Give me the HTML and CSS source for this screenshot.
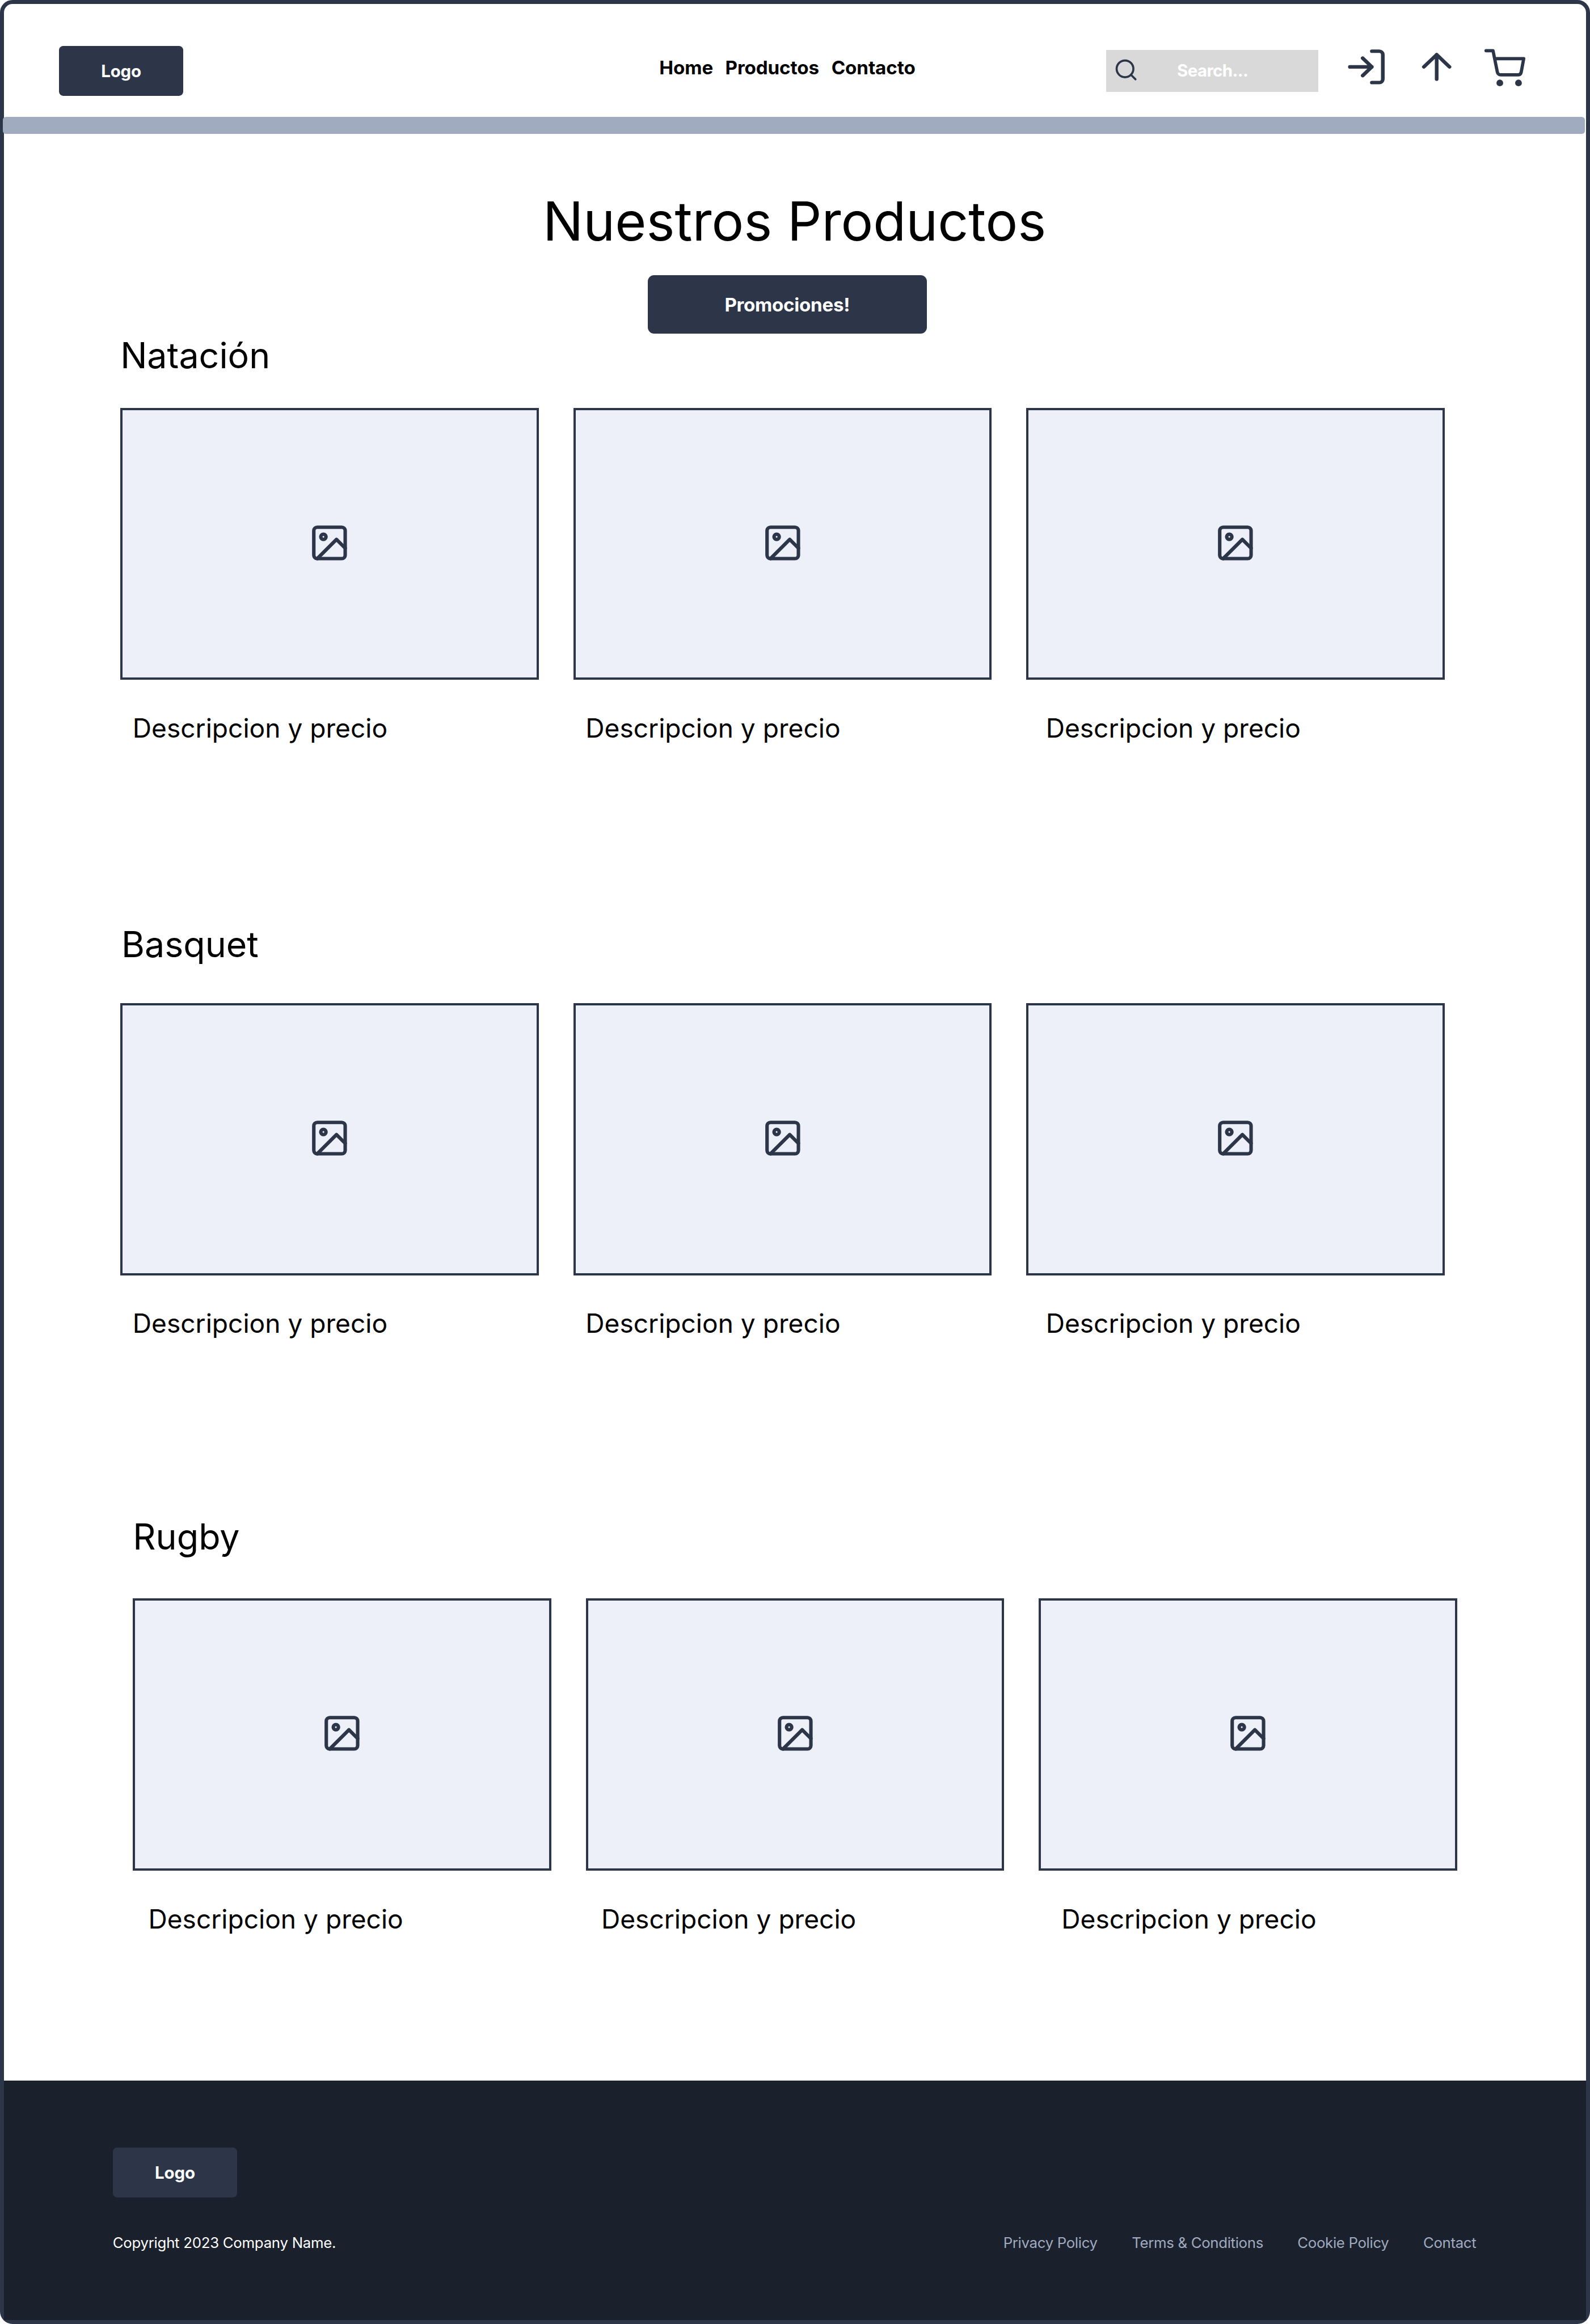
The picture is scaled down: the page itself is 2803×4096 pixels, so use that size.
FILE: index.html
```html
<!DOCTYPE html>
<html lang="es">
<head>
<meta charset="utf-8">
<title>Nuestros Productos</title>
<link rel="stylesheet" href="styles.css">
</head>
<body>
<svg class="sprite" aria-hidden="true">
  <symbol id="image" viewBox="0 0 24 24">
    <rect x="3" y="3" width="18" height="18" rx="2"/>
    <circle cx="8.5" cy="8.5" r="1.5"/>
    <path d="M21 15l-5-5L5 21"/>
  </symbol>
</svg>
<div class="page">
  <header class="header">
    <a class="logo">Logo</a>
    <nav class="nav"><a>Home</a><a>Productos</a><a>Contacto</a></nav>
    <div class="search">
      <svg class="icon search-icon" viewBox="0 0 24 24"><circle cx="11" cy="11" r="8"/><path d="M21 21l-4.35-4.35"/></svg>
      <span class="search-text">Search...</span>
    </div>
    <svg class="icon action" viewBox="0 0 24 24" preserveAspectRatio="none"><path d="M15 3h4a2 2 0 0 1 2 2v14a2 2 0 0 1-2 2h-4M10 17l5-5-5-5M15 12H3"/></svg>
    <svg class="icon action" viewBox="0 0 24 24" preserveAspectRatio="none"><path d="M12 19V5M5 12l7-7 7 7"/></svg>
    <svg class="icon action cart" viewBox="0 0 84 80"><path d="M3 9H16.3L24.5 49.5A6.6 6.6 0 0 0 31 55.3H64.5A6.6 6.6 0 0 0 70.2 50L75 24.3H19.4"/><circle class="wheel" cx="29.3" cy="70.7" r="6.4"/><circle class="wheel" cx="65" cy="70.7" r="6.4"/></svg>
  </header>
  <div class="divider"></div>
  <main class="main">
    <h1 class="title">Nuestros Productos</h1>
    <a class="promo">Promociones!</a>
    <section class="sport natacion">
      <h2 class="sport-name">Natación</h2>
      <div class="cards">
        <article class="card"><div class="photo"><svg class="icon photo-icon"><use href="#image"/></svg></div><p class="caption">Descripcion y precio</p></article>
        <article class="card"><div class="photo"><svg class="icon photo-icon"><use href="#image"/></svg></div><p class="caption">Descripcion y precio</p></article>
        <article class="card"><div class="photo"><svg class="icon photo-icon"><use href="#image"/></svg></div><p class="caption">Descripcion y precio</p></article>
      </div>
    </section>
    <section class="sport basquet">
      <h2 class="sport-name">Basquet</h2>
      <div class="cards">
        <article class="card"><div class="photo"><svg class="icon photo-icon"><use href="#image"/></svg></div><p class="caption">Descripcion y precio</p></article>
        <article class="card"><div class="photo"><svg class="icon photo-icon"><use href="#image"/></svg></div><p class="caption">Descripcion y precio</p></article>
        <article class="card"><div class="photo"><svg class="icon photo-icon"><use href="#image"/></svg></div><p class="caption">Descripcion y precio</p></article>
      </div>
    </section>
    <section class="sport rugby">
      <h2 class="sport-name">Rugby</h2>
      <div class="cards">
        <article class="card"><div class="photo"><svg class="icon photo-icon"><use href="#image"/></svg></div><p class="caption">Descripcion y precio</p></article>
        <article class="card"><div class="photo"><svg class="icon photo-icon"><use href="#image"/></svg></div><p class="caption">Descripcion y precio</p></article>
        <article class="card"><div class="photo"><svg class="icon photo-icon"><use href="#image"/></svg></div><p class="caption">Descripcion y precio</p></article>
      </div>
    </section>
  </main>
  <footer class="footer">
    <a class="logo">Logo</a>
    <div class="legal">
      <span class="copyright">Copyright 2023 Company Name.</span>
      <nav class="links"><a>Privacy Policy</a><a>Terms &amp; Conditions</a><a>Cookie Policy</a><a>Contact</a></nav>
    </div>
  </footer>
</div>
</body>
</html>
```
FILE: styles.css
```css
:root {
  --ink: #2d3648;
  --muted: #a0abc0;
  --tint: #edf0f8;
  --night: #1a202c;
  font-size: 9.2205px;
}

* { box-sizing: border-box; }

body {
  margin: 0;
  background: #fff;
  color: #000;
  font-family: Inter, "Liberation Sans", sans-serif;
}

h1, h2, p { margin: 0; font-weight: 400; }

.sprite { position: absolute; width: 0; height: 0; }

.page {
  display: flex;
  flex-direction: column;
  width: 100vw;
  height: 100vh;
  border: 0.8rem solid var(--ink);
  border-radius: 2.4rem;
}

.icon {
  display: block;
  flex: none;
  overflow: visible;
  fill: none;
  stroke: var(--ink);
  stroke-width: 2;
  stroke-linecap: round;
  stroke-linejoin: round;
}

.logo {
  display: block;
  flex: none;
  width: 23.8rem;
  height: 9.6rem;
  border-radius: 0.8rem;
  background: var(--ink);
  color: #fff;
  font-size: 3.2rem;
  font-weight: 700;
  letter-spacing: -0.02rem;
  line-height: 9.6rem;
  text-align: center;
}

/* Header */
.header {
  display: flex;
  align-items: flex-start;
  flex: none;
  height: 21.6rem;
  padding: 8rem 0 0 10.5rem;
}

.nav {
  display: grid;
  grid-template-columns: 12.6rem 20.3rem 16.3rem;
  margin: 2rem 0 0 91rem;
  font-size: 3.6rem;
  font-weight: 700;
  letter-spacing: -0.012rem;
  line-height: 4.4rem;
  white-space: nowrap;
}

.search {
  display: flex;
  align-items: flex-start;
  width: 40.6rem;
  height: 8rem;
  margin: 0.8rem 0 0 36.2rem;
  padding: 1.4rem;
  background: #d9d9d9;
}

.search-icon { width: 4.8rem; height: 4.8rem; }

.search-text {
  margin: 0.5rem 0 0 7.4rem;
  color: #fff;
  font-size: 3.2rem;
  font-weight: 700;
  letter-spacing: -0.07rem;
  line-height: 4rem;
}

.action { width: 8.4rem; height: 8rem; margin-left: 5rem; }
.cart { stroke-width: 6.2; }
.wheel { fill: var(--ink); stroke: none; }

.divider {
  flex: none;
  height: 3.2rem;
  margin: 0 0.2rem 0 -0.2rem;
  border-radius: 0.6rem;
  background: var(--muted);
}

/* Catalogue */
.main { flex: 1; min-height: 0; }

.title {
  height: 27rem;
  padding: 10.4rem 0.2rem 0 0;
  font-size: 10.27rem;
  line-height: 12.6rem;
  text-align: center;
}

.promo {
  display: block;
  width: 53.4rem;
  height: 11.2rem;
  margin-left: 123.05rem;
  border-radius: 1.2rem;
  background: var(--ink);
  color: #fff;
  font-size: 3.6rem;
  font-weight: 700;
  letter-spacing: -0.033rem;
  line-height: 11.4rem;
  text-align: center;
}

.sport { display: flow-root; height: 113.8rem; margin-left: 22.25rem; }
.rugby { margin-left: 24.65rem; }

.sport-name {
  height: 14.2rem;
  font-size: 6.8rem;
  line-height: 8.3rem;
}

/* These two headings sit higher above their cards than the first one. */
.basquet .sport-name { height: 15.4rem; margin: -1.2rem 0 0 0.2rem; }
.rugby .sport-name { height: 16rem; margin-top: -1.8rem; }

.cards { display: flex; gap: 6.6rem; }
.card { width: 80rem; }

.photo {
  display: flex;
  align-items: center;
  justify-content: center;
  height: 52rem;
  padding-bottom: 0.4rem;
  border: 4px solid var(--ink);
  background: var(--tint);
}

.photo-icon { width: 8rem; height: 8rem; }

.caption {
  padding: 6.05rem 0 0 2.35rem;
  font-size: 5rem;
  line-height: 6.3rem;
}

.card:last-child .caption { padding-left: 3.75rem; }
.rugby .caption { padding-left: 2.95rem; }
.rugby .card:last-child .caption { padding-left: 4.35rem; }

/* Footer */
.footer {
  flex: none;
  height: 45.8rem;
  padding: 12.8rem 21rem 0 20.8rem;
  background: var(--night);
  color: #fff;
  font-size: 2.8rem;
}

.legal {
  display: flex;
  justify-content: space-between;
  padding-top: 6.9rem;
  letter-spacing: -0.03rem;
  line-height: 3.4rem;
}

.links {
  display: flex;
  gap: 6.55rem;
  color: var(--muted);
  letter-spacing: -0.036rem;
}
```
